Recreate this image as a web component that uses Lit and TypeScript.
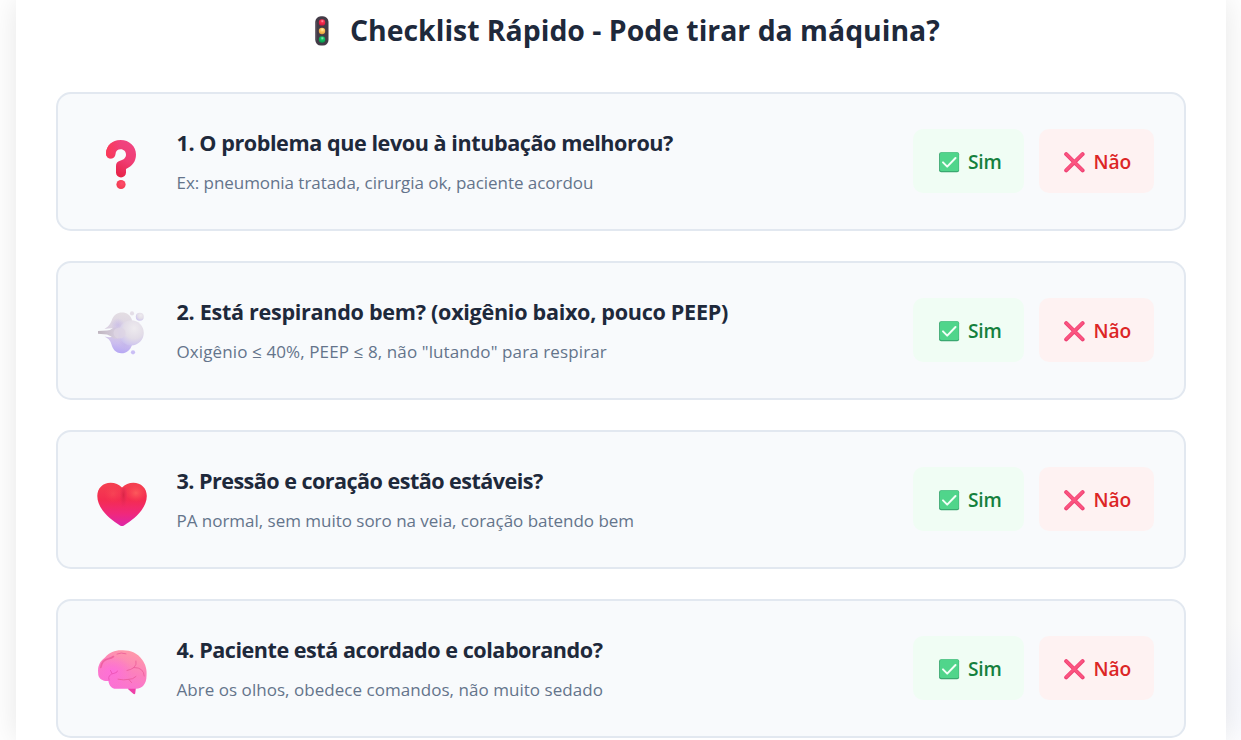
import { LitElement, html, css, svg } from "lit";
import { customElement, property } from "lit/decorators.js";

const light = svg`<svg viewBox="0 0 14 30" width="14" height="30">
  <defs>
    <radialGradient id="r" cx=".55" cy=".3" r=".7"><stop offset="0" stop-color="#ff9db0"/><stop offset=".35" stop-color="#f8314f"/><stop offset="1" stop-color="#d3133c"/></radialGradient>
    <radialGradient id="y" cx=".55" cy=".3" r=".7"><stop offset="0" stop-color="#fff0b8"/><stop offset=".4" stop-color="#ffc75a"/><stop offset="1" stop-color="#e09a3a"/></radialGradient>
    <radialGradient id="g" cx=".55" cy=".3" r=".7"><stop offset="0" stop-color="#8ff0b8"/><stop offset=".4" stop-color="#12bd63"/><stop offset="1" stop-color="#059449"/></radialGradient>
  </defs>
  <rect x=".3" y=".3" width="13.2" height="29.2" rx="5.5" fill="#433b47"/>
  <path d="M1.2 6v18" stroke="#5b5262" stroke-width=".9" stroke-linecap="round"/>
  <circle cx="7" cy="6.4" r="3.2" fill="url(#r)"/>
  <circle cx="7" cy="15" r="3.2" fill="url(#y)"/>
  <circle cx="7" cy="23.5" r="3.2" fill="url(#g)"/>
</svg>`;

const question = svg`
  <defs>
    <linearGradient id="q" x1=".75" y1=".1" x2=".35" y2="1"><stop offset="0" stop-color="#f0437f"/><stop offset=".45" stop-color="#f03c73"/><stop offset="1" stop-color="#e51f42"/></linearGradient>
    <radialGradient id="d" cx=".6" cy=".4" r=".6"><stop offset="0" stop-color="#ff4c6c"/><stop offset="1" stop-color="#f23a50"/></radialGradient>
    <linearGradient id="s" x1="0" y1="0" x2="1" y2="0"><stop offset="0" stop-color="#fb3a58"/><stop offset="1" stop-color="#fb3a58" stop-opacity="0"/></linearGradient>
  </defs>
  <path d="M26 33.8C26 25.5 32.5 20 40.6 20C49.3 20 56 26.2 56 34.5C56 41.5 52.2 46.3 46 48.9V52.4A5 5 0 0 1 36 52.4V46C36 43.2 37.5 41.5 40 40.8C43.8 39.6 46 37.8 46 34.5C46 31.5 43.8 29.2 40.7 29.2C37.5 29.2 35.6 31 35.5 33.8A4.75 4.75 0 0 1 26 33.8Z" fill="url(#q)"/>
  <path d="M26 33.8C26 25.5 32.5 20 40.6 20L40.7 29.2C37.5 29.2 35.6 31 35.5 33.8A4.75 4.75 0 0 1 26 33.8Z" fill="url(#s)"/>
  <circle cx="41" cy="64.5" r="4.6" fill="url(#d)"/>`;

const puff = svg`
  <defs>
    <linearGradient id="a" x1=".4" y1="0" x2=".3" y2="1"><stop offset="0" stop-color="#e3dde3"/><stop offset=".5" stop-color="#d9cfe2"/><stop offset=".75" stop-color="#cbbdef"/><stop offset="1" stop-color="#b3a4f4"/></linearGradient>
    <radialGradient id="b" cx=".62" cy=".32" r=".75"><stop offset="0" stop-color="#eeebef"/><stop offset=".55" stop-color="#e2dce7"/><stop offset="1" stop-color="#c9bff0"/></radialGradient>
    <linearGradient id="t" x1="0" y1="0" x2="1" y2="0"><stop offset="0" stop-color="#bfb5bf"/><stop offset="1" stop-color="#d9d0e1"/></linearGradient>
    <radialGradient id="u"><stop offset="0" stop-color="#c1b3e9" stop-opacity=".6"/><stop offset="1" stop-color="#c1b3e9" stop-opacity="0"/></radialGradient>
  </defs>
  <path d="M24.5 39C29.5 36 31 32.5 32 29.5C33.8 25 37.5 22.5 42 22.5C47 22.5 50.5 25 52 30V55C50.5 60 46.5 63.3 41.5 63.3C35.5 63.3 32.5 58.5 31.5 54.5C30.5 50.5 28 48.3 24.5 46.6C28 47.3 31 47.5 33 46.6L36 43L33 38.4Q29.5 38.2 24.5 39Z" fill="url(#a)"/>
  <path d="M18 41.1L27 40.6Q31 40 34 37.5H38V48.5H34Q31 45.8 27 44.4L18 43.8Z" fill="url(#t)"/>
  <circle cx="38" cy="35" r="7" fill="url(#u)"/><circle cx="45" cy="54" r="7" fill="url(#u)"/>
  <circle cx="51.2" cy="42.8" r="12.6" fill="url(#b)"/>
  <ellipse cx="39.5" cy="43" rx="6" ry="5.5" fill="#ddd4e3" opacity=".8"/>
  <circle cx="52" cy="23.4" r="2.1" fill="#e4dee7"/><circle cx="59.8" cy="26.8" r="4" fill="url(#b)"/><circle cx="53" cy="62.3" r="2.1" fill="#cabef5"/>`;

const heart = svg`
  <defs>
    <linearGradient id="h" x1=".5" y1="0" x2=".5" y2="1"><stop offset="0" stop-color="#f44150"/><stop offset=".4" stop-color="#f42c51"/><stop offset=".72" stop-color="#f0287c"/><stop offset="1" stop-color="#dd26a8"/></linearGradient>
    <radialGradient id="l" cx=".5" cy=".5" r=".5"><stop offset="0" stop-color="#ff665f" stop-opacity=".75"/><stop offset="1" stop-color="#ff5057" stop-opacity="0"/></radialGradient>
    <radialGradient id="m"><stop offset="0" stop-color="#cf2040" stop-opacity=".7"/><stop offset="1" stop-color="#e02663" stop-opacity="0"/></radialGradient>
  </defs>
  <path d="M42 27.6C45 24.4 49 22.8 53.3 22.8C61 22.8 66.8 28.2 66.8 36C66.8 48.5 54 59.5 44 65.4Q42 66.5 40 65.4C30 59.5 17.3 48.5 17.3 36C17.3 28.2 23 22.8 30.6 22.8C35.2 22.8 39 24.4 42 27.6Z" fill="url(#h)"/>
  <ellipse cx="43.5" cy="35" rx="4" ry="13" fill="url(#m)" clip-path="inset(22% 0 0 0)"/>
  <ellipse cx="56" cy="33" rx="10" ry="9" fill="url(#l)"/><ellipse cx="33" cy="34" rx="9" ry="9" fill="url(#l)" opacity=".4"/>`;

const brain = svg`
  <defs>
    <linearGradient id="n" x1=".7" y1="0" x2=".3" y2="1"><stop offset="0" stop-color="#ff9ba8"/><stop offset=".5" stop-color="#fc80bd"/><stop offset="1" stop-color="#fa70d6"/></linearGradient>
    <radialGradient id="o" cx=".3" cy=".55" r=".4"><stop offset="0" stop-color="#ff6cdf" stop-opacity=".8"/><stop offset="1" stop-color="#ff6cdf" stop-opacity="0"/></radialGradient>
  </defs>
  <path d="M47.5 57H56L55.2 63.4Q54.7 64.8 53.3 63.8L48.5 59.5Z" fill="#ee3fa8"/>
  <path d="M18.2 43C17.5 36 20 31 25 27.5C29 22.5 35 20.2 41 20.2C49 19.6 58 22.8 62 29.5C65.5 34 67.2 40 66.5 46C66.5 53.5 62.5 58.8 56 58.8H36C31.5 58.8 29 55.5 28.5 51C22.5 51.5 18 48.5 18.2 43Z" fill="url(#n)"/>
  <path d="M18.2 43C17.5 36 20 31 25 27.5C29 22.5 35 20.2 41 20.2C49 19.6 58 22.8 62 29.5C65.5 34 67.2 40 66.5 46C66.5 53.5 62.5 58.8 56 58.8H36C31.5 58.8 29 55.5 28.5 51C22.5 51.5 18 48.5 18.2 43Z" fill="url(#o)"/>
  <g fill="none" stroke="#ea5795" stroke-opacity=".75" stroke-width="1" stroke-linecap="round" stroke-linejoin="round">
    <path d="M20.8 37.5C21.5 33 24.5 29.5 28.5 28.8Q31.5 28 33.5 26.5" stroke-width="1.6"/><path d="M37 24Q41 22 46 23.8"/><path d="M56 31Q57 34.5 54 37.5Q51 39.8 47 40.5M54 37.5Q59 37.5 61.5 39.8Q64 42 64.2 46"/><path d="M38 49.2Q44 50.5 48 49.4Q53 49.6 56 46.5M49 49.6L51.5 52.5"/>
    <path d="M29 50Q27 44.5 35 43Q37.5 42.5 37.5 41M32 43.5L30.5 40.5" stroke="#e94fb0"/>
  </g>`;

const check = svg`<svg viewBox="0 0 21 21" width="21" height="21">
  <rect x=".1" y=".3" width="20" height="20" rx="2" fill="#3aa870"/><rect x="1" y=".6" width="18.7" height="18.4" rx="1.6" fill="#50d58b"/>
  <path d="M4 10.4L8.2 14.6L16.5 6" fill="none" stroke="#f2fff7" stroke-width="2" stroke-linecap="round" stroke-linejoin="round"/>
</svg>`;

const cross = svg`<svg viewBox="0 0 21 21" width="21" height="21">
  <path d="M2.2 2.2L18.6 18.4M18.6 2.2L2.2 18.4" fill="none" stroke="#ee4073" stroke-width="4" stroke-linecap="round"/><path d="M2.4 2.2L18.2 17.8M18.2 2.2L2.4 17.8" fill="none" stroke="#fb5480" stroke-width="2.4" stroke-linecap="round"/>
</svg>`;

const items = [
  { icon: question, box: "0 0 80 80", title: "1. O problema que levou à intubação melhorou?", hint: "Ex: pneumonia tratada, cirurgia ok, paciente acordou", titleSpace: -0.44, hintSpace: -0.05 },
  { icon: puff, box: "0 -1 80 80", title: "2. Está respirando bem? (oxigênio baixo, pouco PEEP)", hint: 'Oxigênio ≤ 40%, PEEP ≤ 8, não "lutando" para respirar', titleSpace: -0.3, hintSpace: 0.11 },
  { icon: heart, box: "0 -2 80 80", title: "3. Pressão e coração estão estáveis?", hint: "PA normal, sem muito soro na veia, coração batendo bem", titleSpace: -0.55, hintSpace: -0.02 },
  { icon: brain, box: "0 -3 80 80", title: "4. Paciente está acordado e colaborando?", hint: "Abre os olhos, obedece comandos, não muito sedado", titleSpace: -0.48, hintSpace: 0.04 },
];

@customElement("check-item")
class CheckItem extends LitElement {
  @property({ attribute: false }) item!: (typeof items)[number];

  static styles = css`
    :host { display: flex; box-sizing: border-box; height: 139px; border: 2px solid #e2e8f0; border-radius: 15px; background: #f8fafc; padding: 0 30px 0 22px; }
    svg { display: block; flex: none; }
    .icon { margin-top: 26px; width: 80px; height: 80px; }
    .copy { flex: 1; padding: 31px 0 0 16.5px; white-space: nowrap; }
    .title { margin: 0; font-size: 21.6px; line-height: 36px; font-weight: 700; color: #1e293b; }
    .hint { margin: 4px 0 0; font-size: 17px; line-height: 36px; color: #64748b; }
    .answers { display: flex; gap: 15px; padding-top: 35px; }
    .btn { display: flex; align-items: center; gap: 8px; box-sizing: border-box; height: 64px; padding: 1px 0 0 26px; border: 0; border-radius: 10px; font: 600 19.2px "Open Sans", sans-serif; }
    .btn svg { margin-top: 1px; }
    .yes { width: 111px; background: #f0fdf4; color: #15803d; letter-spacing: -0.2px; }
    .no { width: 115px; padding-left: 25px; gap: 8.5px; background: #fef2f2; color: #dc2626; letter-spacing: -0.1px; }
  `;

  render() {
    const { icon, box, title, hint, titleSpace, hintSpace } = this.item;
    return html`
      <div class="icon"><svg viewBox=${box} width="80" height="80">${icon}</svg></div>
      <div class="copy">
        <h3 class="title" style="letter-spacing:${titleSpace}px">${title}</h3>
        <p class="hint" style="letter-spacing:${hintSpace}px">${hint}</p>
      </div>
      <div class="answers">
        <button class="btn yes">${check}<span>Sim</span></button>
        <button class="btn no">${cross}<span>Não</span></button>
      </div>`;
  }
}

@customElement("app-root")
class AppRoot extends LitElement {
  static styles = css`
    :host { display: block; box-sizing: border-box; height: 740px; overflow: hidden; padding: 0 15px 0 16px; background: radial-gradient(circle at 1262px 696px, #f8faff 0, #fafbff 35px, #fff 80px); font-family: "Open Sans", "Noto Sans", sans-serif; }
    .panel { box-sizing: border-box; height: 740px; padding: 0 40px; background: #fff; box-shadow: 0 0 30px rgba(0, 0, 0, 0.1); }
    .heading { display: flex; align-items: center; gap: 21.5px; height: 62px; margin: 0; padding: 0 0 30px 258.5px; white-space: nowrap; font-size: 28.4px; line-height: 36px; font-weight: 700; color: #1e293b; }
    .heading svg { display: block; flex: none; }
    .heading span { margin-top: -2px; }
    .list { display: grid; gap: 30px; }
  `;

  render() {
    return html`<main class="panel">
      <h2 class="heading">${light}<span>Checklist Rápido - Pode tirar da máquina?</span></h2>
      <section class="list">${items.map((item) => html`<check-item .item=${item}></check-item>`)}</section>
    </main>`;
  }
}
